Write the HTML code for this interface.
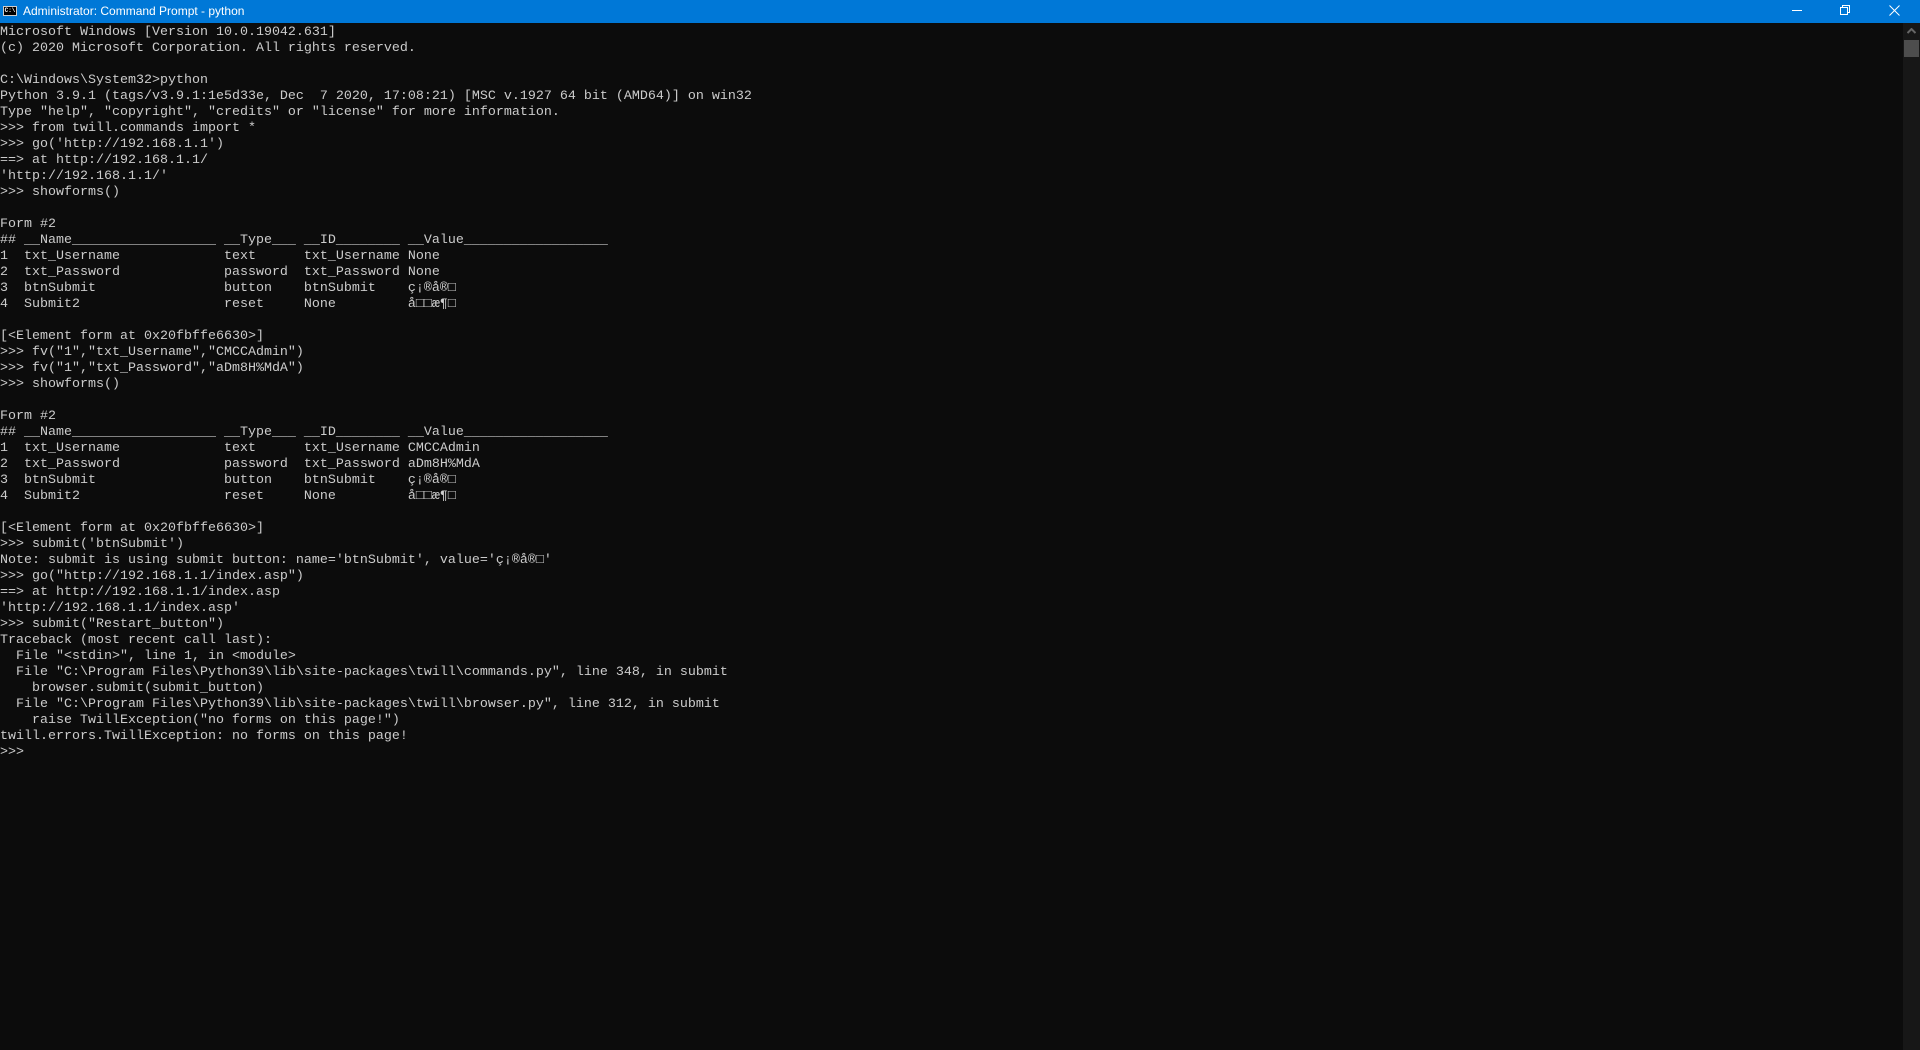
<!DOCTYPE html>
<html><head><meta charset="utf-8">
<style>
html,body{margin:0;padding:0;width:1920px;height:1050px;overflow:hidden;background:#0c0c0c;}
#title{position:absolute;left:0;top:0;width:1920px;height:23px;background:#0078d7;color:#fff;font-family:"Liberation Sans",sans-serif;font-size:12px;line-height:23px;}
#title .t{position:absolute;left:23px;top:0;}
#icon{position:absolute;left:3px;top:6px;width:14px;height:10px;background:#000;border:1px solid #ccc;box-sizing:border-box;color:#fff;font-family:"Liberation Mono",monospace;font-size:6px;line-height:8px;text-align:center;font-weight:bold;}
.ctl{position:absolute;top:0;height:23px;}
pre{position:absolute;left:0;top:25px;margin:0;font-family:"Liberation Mono",monospace;font-size:13.33px;line-height:16px;color:#cccccc;white-space:pre;}
#sb{position:absolute;right:0;top:23px;width:17px;height:1027px;background:#171717;}
#thumb{position:absolute;left:1px;top:17px;width:15px;height:17px;background:#4d4d4d;}
</style></head><body>
<div id="title"><div id="icon">C:\</div><span class="t">Administrator: Command Prompt - python</span>
<svg class="ctl" style="left:1792px" width="30" height="23"><line x1="0" y1="10.5" x2="10" y2="10.5" stroke="#fff" stroke-width="1"/></svg>
<svg class="ctl" style="left:1840px" width="30" height="23"><rect x="0.5" y="7.5" width="7" height="7" fill="none" stroke="#fff"/><path d="M2.5 7.5V5.5H9.5V12.5H7.5" fill="none" stroke="#fff"/></svg>
<svg class="ctl" style="left:1889px" width="30" height="23"><path d="M0.5 5.5L10.5 15.5M10.5 5.5L0.5 15.5" stroke="#fff" stroke-width="1"/></svg>
</div>
<pre>Microsoft Windows [Version 10.0.19042.631]
(c) 2020 Microsoft Corporation. All rights reserved.

C:\Windows\System32&gt;python
Python 3.9.1 (tags/v3.9.1:1e5d33e, Dec  7 2020, 17:08:21) [MSC v.1927 64 bit (AMD64)] on win32
Type "help", "copyright", "credits" or "license" for more information.
&gt;&gt;&gt; from twill.commands import *
&gt;&gt;&gt; go('http://192.168.1.1')
==&gt; at http://192.168.1.1/
'http://192.168.1.1/'
&gt;&gt;&gt; showforms()

Form #2
## __Name__________________ __Type___ __ID________ __Value__________________
1  txt_Username             text      txt_Username None
2  txt_Password             password  txt_Password None
3  btnSubmit                button    btnSubmit    ç¡®å®□
4  Submit2                  reset     None         å□□æ¶□

[&lt;Element form at 0x20fbffe6630&gt;]
&gt;&gt;&gt; fv("1","txt_Username","CMCCAdmin")
&gt;&gt;&gt; fv("1","txt_Password","aDm8H%MdA")
&gt;&gt;&gt; showforms()

Form #2
## __Name__________________ __Type___ __ID________ __Value__________________
1  txt_Username             text      txt_Username CMCCAdmin
2  txt_Password             password  txt_Password aDm8H%MdA
3  btnSubmit                button    btnSubmit    ç¡®å®□
4  Submit2                  reset     None         å□□æ¶□

[&lt;Element form at 0x20fbffe6630&gt;]
&gt;&gt;&gt; submit('btnSubmit')
Note: submit is using submit button: name='btnSubmit', value='ç¡®å®□'
&gt;&gt;&gt; go("http://192.168.1.1/index.asp")
==&gt; at http://192.168.1.1/index.asp
'http://192.168.1.1/index.asp'
&gt;&gt;&gt; submit("Restart_button")
Traceback (most recent call last):
  File "&lt;stdin&gt;", line 1, in &lt;module&gt;
  File "C:\Program Files\Python39\lib\site-packages\twill\commands.py", line 348, in submit
    browser.submit(submit_button)
  File "C:\Program Files\Python39\lib\site-packages\twill\browser.py", line 312, in submit
    raise TwillException("no forms on this page!")
twill.errors.TwillException: no forms on this page!
&gt;&gt;&gt;</pre>
<div id="sb"><svg style="position:absolute;left:4px;top:5px" width="9" height="6"><path d="M0.5 5L4.5 1L8.5 5" fill="none" stroke="#666" stroke-width="2"/></svg><div id="thumb"></div></div>
</body></html>
